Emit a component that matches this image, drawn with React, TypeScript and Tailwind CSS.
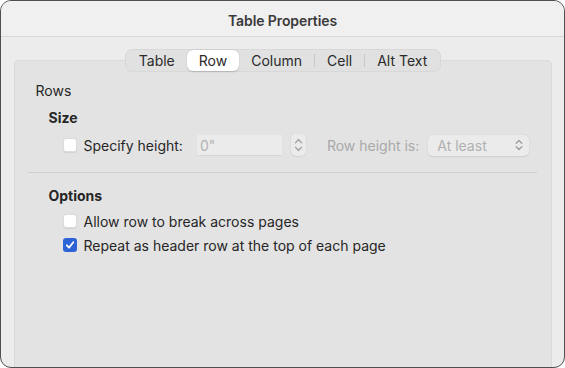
import React from "react";

function Checkbox({ checked }: { checked?: boolean }) {
  if (checked) {
    return (
      <div className="w-[14px] h-[14px] rounded-[3px] bg-[#2c63d6] flex items-center justify-center shrink-0">
        <svg width="10" height="10" viewBox="0 0 10 10" fill="none">
          <path d="M1.8 5.3 L4 7.6 L8.3 2.3" stroke="white" strokeWidth="1.8" strokeLinecap="round" strokeLinejoin="round" />
        </svg>
      </div>
    );
  }
  return (
    <div className="w-[14px] h-[14px] rounded-[3px] bg-white border border-[#dcdcdc] shadow-[0_0.5px_1px_rgba(0,0,0,0.08)] shrink-0" />
  );
}

export default function App() {
  const tabs = ["Table", "Row", "Column", "Cell", "Alt Text"];
  return (
    <div
      className="w-[565px] h-[368px] bg-[#ececec] border-[1.5px] border-[#4f4f4f] rounded-[11px] overflow-hidden flex flex-col text-[#262626]"
      style={{ fontFamily: "Inter, 'Noto Sans', sans-serif" }}
    >
      <div className="h-[36px] shrink-0 bg-[#f0f0f0] border-b border-[#d9d9d9] flex items-center justify-center pt-[3px]">
        <span className="text-[14px] font-semibold text-[#3a3a3a] tracking-[-0.1px]">Table Properties</span>
      </div>
      <div className="flex-1 flex flex-col px-[12.5px] pt-[12px]">
        <div className="relative z-10 self-center flex items-center h-[23px] rounded-[7px] bg-[#e1e1e1] border border-[#d8d8d8] px-[1px] ml-[1px] text-[14px] text-[#2a2a2a]">
          {tabs.map((t, i) => {
            const selected = t === "Row";
            const showSep = i >= 3;
            return (
              <React.Fragment key={t}>
                {showSep && <div className="w-px h-[13px] bg-[#c8c8c8]" />}
                <div
                  className={
                    selected
                      ? "h-[21px] flex items-center justify-center rounded-[6px] bg-white shadow-[0_0.5px_1.5px_rgba(0,0,0,0.18)] px-[12px]"
                      : "h-[21px] flex items-center justify-center px-[12px]"
                  }
                >
                  {t}
                </div>
              </React.Fragment>
            );
          })}
        </div>
        <div className="-mt-[12px] flex-1 bg-[#e3e3e3] border border-[#dadada] border-b-0 rounded-t-[5px] flex flex-col pl-[21px] pr-[13px] pt-[20px] text-[14px]">
          <div className="h-[18px] flex items-center">Rows</div>
          <div className="h-[18px] flex items-center mt-[9px] pl-[13px] font-bold">Size</div>
          <div className="h-[22px] flex items-center mt-[8px] pl-[27px]">
            <Checkbox />
            <span className="ml-[7px]">Specify height:</span>
            <div className="ml-[14px] w-[85px] h-[20px] bg-[#ebebeb] flex items-center pl-[3px] text-[#b3b3b3] shadow-[0_0.5px_1px_rgba(0,0,0,0.06)]">
              0"
            </div>
            <div className="ml-[9px] w-[15px] h-[22px] rounded-[5px] bg-[#ebebeb] shadow-[0_0.5px_1.5px_rgba(0,0,0,0.12)] flex flex-col items-center justify-center gap-[2px]">
              <svg width="9" height="6" viewBox="0 0 9 6" fill="none">
                <path d="M1.5 4.8 L4.5 1.5 L7.5 4.8" stroke="#a3a3a3" strokeWidth="1.3" strokeLinecap="round" strokeLinejoin="round" />
              </svg>
              <svg width="9" height="6" viewBox="0 0 9 6" fill="none">
                <path d="M1.5 1.2 L4.5 4.5 L7.5 1.2" stroke="#a3a3a3" strokeWidth="1.3" strokeLinecap="round" strokeLinejoin="round" />
              </svg>
            </div>
            <span className="ml-[21px] text-[#a9a9a9]">Row height is:</span>
            <div className="ml-[9px] w-[101px] h-[21px] rounded-[5px] bg-[#ebebeb] shadow-[0_0.5px_1.5px_rgba(0,0,0,0.1)] flex items-center justify-between pl-[9px] pr-[6px] text-[#b0b0b0]">
              <span>At least</span>
              <svg width="8" height="12" viewBox="0 0 8 12" fill="none">
                <path d="M1.2 4.3 L4 1.5 L6.8 4.3" stroke="#9c9c9c" strokeWidth="1.3" strokeLinecap="round" strokeLinejoin="round" />
                <path d="M1.2 7.7 L4 10.5 L6.8 7.7" stroke="#9c9c9c" strokeWidth="1.3" strokeLinecap="round" strokeLinejoin="round" />
              </svg>
            </div>
          </div>
          <div className="mt-[16px] ml-[-8px] mr-[1px] h-px bg-[#d0d0d0]" />
          <div className="h-[18px] flex items-center mt-[13px] pl-[13px] font-bold">Options</div>
          <div className="h-[18px] flex items-center mt-[8px] pl-[27px]">
            <Checkbox />
            <span className="ml-[7px]">Allow row to break across pages</span>
          </div>
          <div className="h-[18px] flex items-center mt-[6px] pl-[27px]">
            <Checkbox checked />
            <span className="ml-[7px]">Repeat as header row at the top of each page</span>
          </div>
        </div>
      </div>
    </div>
  );
}
